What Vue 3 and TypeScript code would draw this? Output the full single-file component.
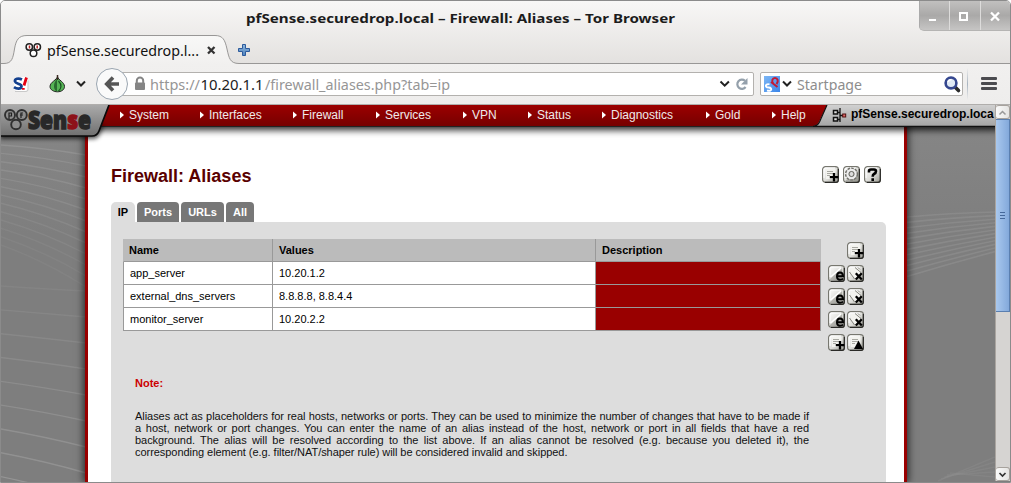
<script setup lang="ts">
interface MenuEntry { label: string }
interface AliasRow { name: string; values: string }

const menu: MenuEntry[] = [
  'System', 'Interfaces', 'Firewall', 'Services', 'VPN', 'Status', 'Diagnostics', 'Gold', 'Help',
].map((label) => ({ label }))

const tabs: string[] = ['IP', 'Ports', 'URLs', 'All']

const aliases: AliasRow[] = [
  { name: 'app_server', values: '10.20.1.2' },
  { name: 'external_dns_servers', values: '8.8.8.8, 8.8.4.4' },
  { name: 'monitor_server', values: '10.20.2.2' },
]

const noteLines: string[] = [
  'Aliases act as placeholders for real hosts, networks or ports. They can be used to minimize the number of changes that have to be made if',
  'a host, network or port changes. You can enter the name of an alias instead of the host, network or port in all fields that have a red',
  'background. The alias will be resolved according to the list above. If an alias cannot be resolved (e.g. because you deleted it), the',
  'corresponding element (e.g. filter/NAT/shaper rule) will be considered invalid and skipped.',
]

const range = (n: number): number[] => Array.from({ length: n }, (_, i) => i)

// Faint curved streaks of the page backdrop, in content coordinates.
const leftUpper = range(13).map((i) => `M0 ${40 + i * 8.3} Q45 ${43 + i * 9.4} 86 ${50 + i * 11}`)
const leftLower = range(9).map((i) => `M0 ${181 + i * 23.8} Q45 ${184 + i * 24.6} 86 ${186 + i * 26}`)
const rightUpper = range(12).map((i) => `M907 ${112 + i * 5.4} Q950 ${108 + i * 4.6} 995 ${107 + i * 3.6}`)
const rightLower = range(5).map((i) => `M${938 + i * 3} ${376 - i * 2} L995 ${352 + i * 5}`)
</script>

<template>
  <div class="window">
    <header class="titlebar">
      <svg class="title" width="434" height="24" viewBox="0 0 434 24">
        <text x="2" y="17" textLength="429" lengthAdjust="spacingAndGlyphs" class="ui bold">pfSense.securedrop.local – Firewall: Aliases – Tor Browser</text>
      </svg>
      <div class="controls">
        <span class="ctl"><svg width="30" height="30"><path d="M10 19h7" stroke="#fff" stroke-width="2" /></svg></span>
        <span class="ctl"><svg width="30" height="30"><rect x="11" y="12" width="7" height="7" fill="none" stroke="#fff" stroke-width="2" /></svg></span>
        <span class="ctl"><svg width="30" height="30"><path d="M11 11.5l8 8M19 11.5l-8 8" stroke="#fff" stroke-width="2.300" /></svg></span>
      </div>
      <svg class="tabstrip" width="1009" height="30" viewBox="1 35 1009 30">
        <defs>
          <linearGradient id="tabFill" x1="0" y1="0" x2="0" y2="1">
            <stop offset="0" stop-color="#f8f8f7" /><stop offset="1" stop-color="#f1f0ef" />
          </linearGradient>
          <linearGradient id="plusFill" x1="0" y1="0" x2="0" y2="1">
            <stop offset="0" stop-color="#8db6dc" /><stop offset="1" stop-color="#4f83be" />
          </linearGradient>
        </defs>
        <path d="M0 65V63.500H4C12 63.500 13 58 14.500 49C16 40 18.500 35.500 27 35.500H215C223 35.500 225 40 227 49C229 58 230 63.500 239 63.500H1010V65Z" fill="url(#tabFill)" />
        <path d="M0 63.500H4C12 63.500 13 58 14.500 49C16 40 18.500 35.500 27 35.500H215C223 35.500 225 40 227 49C229 58 230 63.500 239 63.500H1011" fill="none" stroke="#989796" />
        <g fill="#fff" stroke="#222" stroke-width="1.500">
          <circle cx="33.500" cy="53.300" r="3.300" /><circle cx="29.300" cy="47" r="3.200" /><circle cx="37.300" cy="47" r="3.200" />
        </g>
        <path d="M29.500 45.500v3M37.200 45.500v3" stroke="#b22" stroke-width="1.500" />
        <text x="47" y="56" textLength="152" lengthAdjust="spacingAndGlyphs" class="ui" fill="#111">pfSense.securedrop.l...</text>
        <path d="M208 47l6.500 6.500M214.500 47l-6.500 6.500" stroke="#333" stroke-width="2.300" />
        <path d="M242.500 44.500h3v4h4v3h-4v4h-3v-4h-4v-3h4z" fill="url(#plusFill)" stroke="#2c5a9c" />
      </svg>
    </header>

    <div class="toolbar">
      <svg class="tools" width="125" height="40" viewBox="1 64 125 40">
        <rect x="14" y="77" width="14" height="14" rx="4" fill="#fff" />
        <path d="M15 91.500h11q2 0 2-2v-9" fill="none" stroke="#c9c9c9" />
        <path d="M22 79.500C18 77.500 14.500 79 15 81.500S22 83.500 21.500 86.500S16.500 89 14 87.200" fill="none" stroke="#14408e" stroke-width="2.700" />
        <path d="M26.500 77.500L24 85.500M23.300 88v1.800" fill="none" stroke="#e60012" stroke-width="2.800" />
        <path d="M57.500 76.500C58 80 64.500 82 64.500 86.500C64.500 90 61 91.800 57.500 91.800S50 90 50 86.500C50 82 57 80 57.500 76.500Z" fill="#55b455" stroke="#222" />
        <path d="M57 79V91.500C53 90 53 83 57 79Z" fill="#2a6a30" />
        <path d="M58.500 81C62.500 85 61 89 58.500 91" fill="none" stroke="#194d20" stroke-width="1.200" />
        <path d="M57.500 75v5" stroke="#3a2a20" stroke-width="1.500" />
        <path d="M77 81.500l4 4 4-4" fill="none" stroke="#222" stroke-width="2" />
      </svg>
      <div class="urlbar">
        <svg width="627" height="24" viewBox="126 72 627 24">
          <path d="M136.800 83v-2.200a3.200 3.200 0 0 1 6.400 0V83" fill="none" stroke="#858585" stroke-width="2" />
          <rect x="135" y="82.500" width="10" height="7.500" rx="1" fill="#858585" />
          <text x="150" y="90" textLength="50" lengthAdjust="spacingAndGlyphs" class="url" fill="#969696">https://</text>
          <text x="200.500" y="90" textLength="63" lengthAdjust="spacingAndGlyphs" class="url" fill="#222">10.20.1.1</text>
          <text x="265" y="90" textLength="185" lengthAdjust="spacingAndGlyphs" class="url" fill="#969696">/firewall_aliases.php?tab=ip</text>
          <path d="M720.500 81.500l4.200 4.200 4.200-4.200" fill="none" stroke="#222" stroke-width="2" />
          <path d="M745 80.800A4.600 4.600 0 1 0 745.600 87" fill="none" stroke="#94a0ab" stroke-width="2.200" />
          <path d="M747.500 78v6.500h-6.500z" fill="#94a0ab" />
        </svg>
      </div>
      <svg class="back" width="34" height="34" viewBox="95 67 34 34">
        <circle cx="112" cy="84" r="15.500" fill="#fafafa" stroke="#9aa5b0" />
        <path d="M119 84H108M113 77.500l-6.300 6.500 6.300 6.500" fill="none" stroke="#555" stroke-width="3.600" />
      </svg>
      <div class="search">
        <svg width="202" height="22" viewBox="761 73 202 22">
          <defs>
            <linearGradient id="sp" x1="0" y1="0" x2="1" y2="1"><stop offset="0" stop-color="#7db7f5" /><stop offset="1" stop-color="#3b86ea" /></linearGradient>
          </defs>
          <rect x="764" y="76" width="16" height="16" fill="url(#sp)" />
          <path d="M769.500 84.500c-2-1-4.500 .5-3.300 2.200s3.800 0 4.800 1.800-1.500 3-4 1.800" fill="none" stroke="#fff" stroke-width="1.900" />
          <path d="M771 82l6.500 5M773.500 84c-2.500-3-1-6 1.500-6s4 3 1.500 6" fill="none" stroke="#c21a35" stroke-width="2" />
          <path d="M783 81.500l4 4 4-4" fill="none" stroke="#222" stroke-width="2" />
          <text x="797" y="90" textLength="65" lengthAdjust="spacingAndGlyphs" class="url" fill="#8d8d8d">Startpage</text>
          <path d="M955 87l3.500 3.500" stroke="#2b2b2b" stroke-width="3.600" stroke-linecap="round" />
          <circle cx="951" cy="83" r="5.400" fill="#dfe9f5" stroke="#35478f" stroke-width="2.600" />
          <path d="M948 82q1-2.500 3.500-2.500" fill="none" stroke="#fff" stroke-width="1.500" />
        </svg>
      </div>
      <span class="sep"></span>
      <div class="burger"><i></i><i></i><i></i></div>
    </div>

    <main class="viewport">
      <svg class="backdrop" width="994" height="377" viewBox="1 105 994 377">
        <g transform="translate(0 105)" fill="none">
          <g stroke="#999" stroke-width="1.400">
            <path v-for="(d, i) in leftUpper" :key="'a' + i" :d="d" :opacity="0.6 - i * 0.035" />
            <path v-for="(d, i) in leftLower" :key="'b' + i" :d="d" :opacity="0.25 + i * 0.07" />
          </g>
          <g stroke="#8f8f8f" stroke-width="1.600">
            <path v-for="(d, i) in rightUpper" :key="'c' + i" :d="d" opacity=".65" />
            <path v-for="(d, i) in rightLower" :key="'d' + i" :d="d" opacity=".35" />
          </g>
        </g>
      </svg>

      <svg width="0" height="0" class="defs">
        <defs>
          <linearGradient id="btnFill" x1="0" y1="0" x2="1" y2="1">
            <stop offset="0" stop-color="#fff" /><stop offset=".55" stop-color="#dcdcd8" /><stop offset="1" stop-color="#96968e" />
          </linearGradient>
          <symbol id="btn" viewBox="0 0 17 17">
            <rect x=".6" y=".6" width="15.800" height="15.800" rx="3" fill="url(#btnFill)" stroke="#77776f" stroke-width="1.200" />
            <path d="M2 12V3.500Q2 2 3.500 2H13" fill="none" stroke="#fff" />
            <path d="M3 16.300H14Q16.300 16.300 16.300 14V3" fill="none" stroke="#2a2a27" stroke-width="1.200" />
          </symbol>
          <symbol id="page" viewBox="0 0 17 17">
            <use href="#btn" /><path d="M4 3h9.500v10H4z" fill="#f3f3ef" /><path d="M5 5.500h6M5 7.500h6M5 9.500h3" stroke="#a8a8a2" />
          </symbol>
          <symbol id="add" viewBox="0 0 17 17">
            <use href="#page" /><path d="M12 7v8.500M7.800 11.200h8.500" stroke="#000" stroke-width="2.300" />
          </symbol>
          <symbol id="up" viewBox="0 0 17 17">
            <use href="#page" /><path d="M11.500 6.500L16 15H7z" fill="#000" />
          </symbol>
          <symbol id="edit" viewBox="0 0 17 17">
            <use href="#btn" /><path d="M2 14L14 3v12H2z" fill="#8d8d86" opacity=".55" /><path d="M2.500 12L13 3" stroke="#fff" stroke-width="1.500" />
            <path d="M9 11.200H15Q15 7.500 12 7.500T9 11.200T12 14.800Q14 14.800 15 13.500" fill="none" stroke="#000" stroke-width="2" />
          </symbol>
          <symbol id="del" viewBox="0 0 17 17">
            <use href="#btn" /><path d="M4 3h9v8L9 14 4 9z" fill="#f3f3ef" /><path d="M8 2.500l6 5M2.500 7l5 7M11 2.500l2 2" stroke="#85857e" fill="none" />
            <path d="M8.800 8.200l6 6.300M14.800 8.200l-6 6.300" stroke="#000" stroke-width="2.300" />
          </symbol>
          <symbol id="gear" viewBox="0 0 17 17">
            <use href="#btn" /><path d="M2 15L15 5v10z" fill="#8f8f88" opacity=".6" />
            <circle cx="8.500" cy="8" r="5.400" fill="#ccc" stroke="#70706a" stroke-width="2.400" stroke-dasharray="2.400 1.100" />
            <circle cx="8.500" cy="8" r="4.200" fill="none" stroke="#eee" stroke-width="2" /><circle cx="8.500" cy="8" r="2.500" fill="#ddd" stroke="#66665f" />
          </symbol>
          <symbol id="help" viewBox="0 0 17 17">
            <use href="#btn" /><path d="M5 6.500V5q0-1.500 2-1.500h3q2 0 2 1.800T10 8Q8.700 8.700 8.700 10.800M8.700 12.200V15" fill="none" stroke="#000" stroke-width="2.600" />
          </symbol>
        </defs>
      </svg>

      <section class="page">
        <div class="heading">
          <h1>Firewall: Aliases</h1>
          <div class="actions">
            <svg width="17" height="17"><use href="#add" /></svg>
            <svg width="17" height="17"><use href="#gear" /></svg>
            <svg width="17" height="17"><use href="#help" /></svg>
          </div>
        </div>
        <nav class="tabs">
          <span v-for="(t, i) in tabs" :key="t" :class="['tab', 't' + i, { active: i === 0 }]">{{ t }}</span>
        </nav>
        <div class="panel">
          <div class="list">
            <div class="grid">
              <div class="row head"><span>Name</span><span>Values</span><span>Description</span></div>
              <div v-for="a in aliases" :key="a.name" class="row">
                <span>{{ a.name }}</span><span>{{ a.values }}</span><span class="red"></span>
              </div>
            </div>
            <div class="rowicons">
              <div class="pair"><svg width="17" height="17"><use href="#add" /></svg></div>
              <div v-for="a in aliases" :key="a.name" class="pair">
                <svg width="17" height="17"><use href="#edit" /></svg><svg width="17" height="17"><use href="#del" /></svg>
              </div>
              <div class="pair"><svg width="17" height="17"><use href="#add" /></svg><svg width="17" height="17"><use href="#up" /></svg></div>
            </div>
          </div>
          <div class="note">
            <strong>Note:</strong>
            <p><span v-for="l in noteLines" :key="l">{{ l }}</span></p>
          </div>
        </div>
      </section>

      <div class="menubar">
        <span v-for="m in menu" :key="m.label" class="entry"><svg width="4" height="8" viewBox="0 0 4 8"><path d="M0 0.500L4 4L0 7.500Z" fill="#fff" /></svg>{{ m.label }}</span>
      </div>
      <svg class="host" width="182" height="22" viewBox="813 105 182 22">
        <defs><linearGradient id="hostFill" x1="0" y1="0" x2="0" y2="1"><stop offset="0" stop-color="#d0d0d0" /><stop offset="1" stop-color="#a5a5a5" /></linearGradient></defs>
        <path d="M827 105H995V126H813Q817 126 819 122Z" fill="url(#hostFill)" />
        <path d="M827 105L819.500 122Q817.500 126 813 126.300H995" fill="none" stroke="#111" stroke-width="1.200" />
        <path d="M833.500 110.500h4v3.500h-4zM833.500 117.500h4v3.500h-4z" fill="#ddd" stroke="#111" stroke-width="1.500" />
        <path d="M838 112.500h2.500M838 119.500h2.500M840 108v14M840 115.500h3" stroke="#111" stroke-width="1.300" fill="none" />
        <rect x="842.700" y="114" width="3" height="3" fill="#d66" stroke="#501010" />
      </svg>
      <div class="hostname">pfSense.securedrop.loca</div>
      <svg class="logo" width="112" height="42" viewBox="1 105 112 42">
        <defs>
          <linearGradient id="logoFill" x1="0" y1="0" x2="0" y2="1"><stop offset="0" stop-color="#aaa" /><stop offset="1" stop-color="#707070" /></linearGradient>
          <filter id="soft" x="-10%" y="-30%" width="120%" height="170%"><feGaussianBlur stdDeviation="2" /></filter>
        </defs>
        <path d="M0 125H104L100 134Q98 139 93 139H0Z" fill="#000" opacity=".65" filter="url(#soft)" />
        <path d="M0 105H109L99 131Q97 136 92 136H0Z" fill="url(#logoFill)" />
        <path d="M109 105L99 131Q97 136 92 136H0" fill="none" stroke="#0a0a0a" stroke-width="1.700" />
        <g fill="#8d8d8d" stroke="#303030" stroke-width="1.900">
          <circle cx="16" cy="124.500" r="4.800" /><circle cx="10" cy="115" r="5" /><circle cx="21.800" cy="115" r="5" />
        </g>
        <path d="M9 119v-6h2.500v3H9M21 118v-5h2M20 115h3" fill="none" stroke="#222" stroke-width="1.200" />
        <text x="28" y="129" textLength="63" lengthAdjust="spacingAndGlyphs" class="brand">Sen<tspan fill="#8d1118" stroke="#8d1118">s</tspan>e</text>
      </svg>

      <div class="scroll">
        <div class="sbtn"><svg width="15" height="13"><path d="M4.500 8.500L7.500 5.500L10.500 8.500" fill="none" stroke="#999" stroke-width="1.500" /></svg></div>
        <div class="thumb"><i></i><i></i><i></i></div>
        <div class="track"></div>
        <div class="sbtn"><svg width="15" height="13"><path d="M4.500 5L7.500 8L10.500 5" fill="none" stroke="#333" stroke-width="1.700" /></svg></div>
      </div>
    </main>
  </div>
</template>

<style>
body { margin: 0; background: #fff; overflow: hidden; }
</style>

<style scoped>
* { box-sizing: border-box; }
svg { display: block; }
.window { width: 1011px; height: 483px; border: 1px solid #8b8b8b; border-radius: 5px 5px 0 0; overflow: hidden; background: #efeeed; font-family: "Liberation Sans", Arial, sans-serif; }
.ui { font: 13.5px "Noto Sans", sans-serif; }
.ui.bold { font-weight: 700; font-size: 12.8px; fill: #1c1c1c; }
.url { font: 14px "Noto Sans", sans-serif; }
.titlebar { position: relative; height: 63px; background: linear-gradient(#f8f7f6, #e3e1df); }
.title { position: absolute; left: 243px; top: 5px; }
.controls { position: absolute; right: 0; top: 0; display: flex; width: 91px; height: 30px; border-radius: 0 0 0 5px; overflow: hidden; background: linear-gradient(#c1c0bf, #aaa9a8 50%, #c6c5c4); border-bottom: 1px solid #b5b4b3; }
.ctl { flex: 1; border-left: 1px solid #dddcdb; }
.ctl:first-child { border-left-color: #aaa; }
.ctl svg { margin-left: -1px; }
.tabstrip { position: absolute; left: 0; top: 34px; }
.toolbar { position: relative; height: 41px; display: flex; align-items: center; background: linear-gradient(#f1f0ef, #eeedec); border-bottom: 1px solid #b0aeac; }
.tools { flex: none; margin-right: -14px; }
.urlbar { width: 642px; height: 24px; display: flex; justify-content: flex-end; border: 1px solid #b3b1ae; border-radius: 2px; background: #fff; align-items: center; }
.back { position: absolute; left: 94px; top: 3px; }
.search { margin-left: 6px; width: 203px; height: 24px; border: 1px solid #b3b1ae; border-radius: 2px; background: #fff; }
.sep { width: 1px; height: 32px; margin-left: 4px; background: linear-gradient(transparent, #a8b4c0, transparent); }
.burger { margin-left: 13px; display: flex; flex-direction: column; gap: 2px; margin-top: -2px; }
.burger i { width: 16px; height: 3px; border-radius: 1px; background: #4b4b4f; }
.viewport { position: relative; height: 377px; overflow: hidden; background: linear-gradient(#878787, #7e7e7e 130px, #7e7e7e); }
.backdrop { position: absolute; inset: 0 auto auto 0; }
.defs { position: absolute; }
.page { position: relative; width: 822px; height: 377px; margin-left: 84px; border: solid #900; border-width: 0 3px; background: #fff; padding: 60px 18px 0 23px; box-shadow: 0 0 8px 1px rgba(0, 0, 0, .75); }
.heading { display: flex; justify-content: space-between; height: 37px; padding-right: 5px; }
h1 { margin: 0; font-size: 18px; line-height: 22px; color: #590000; }
.actions { display: flex; gap: 4px; padding-top: 1px; }
.tabs { display: flex; gap: 2px; height: 20px; }
.tab { height: 20px; background: #777; color: #fff; font: bold 11px/20px "Liberation Sans", Arial, sans-serif; text-align: center; border-radius: 4px 4px 0 0; }
.tab.active { background: #ddd; color: #000; border-radius: 5px 5px 0 0; }
.t0 { width: 24px; }
.t1 { width: 42px; }
.t2 { width: 43px; }
.t3 { width: 28px; }
.panel { width: 775px; height: 260px; padding: 17px 12px 0; background: #ddd; border-radius: 0 5px 0 0; font-size: 11px; }
.list { display: flex; gap: 7px; height: 115px; }
.grid { width: 698px; }
.row { display: grid; grid-template-columns: 150px 323px 225px; height: 23px; line-height: 22px; background: #fff; }
.row span { border-right: 1px solid #999; border-bottom: 1px solid #999; padding-left: 6px; }
.row span:first-child { border-left: 1px solid #999; }
.head { background: #bbb; font-weight: bold; }
.head span:first-child { border-left-color: #bbb; padding-left: 5px; }
.head span:last-child { border-right-color: #bbb; }
.row .red { background: #900; }
.rowicons { width: 36px; padding-top: 3px; }
.pair { display: flex; justify-content: flex-end; gap: 2px; height: 23px; }
.note { padding: 23px 12px 0; line-height: 12px; }
.note strong { color: #c00; display: block; }
p { margin: 21px 0 0; width: 674px; color: #111; letter-spacing: -.05px; }
p span { display: block; white-space: nowrap; text-align: justify; text-align-last: justify; }
p span:last-child { text-align-last: left; }
.menubar { position: absolute; inset: 0 0 auto 0; height: 22px; padding-left: 119px; display: grid; grid-template-columns: 80px 93px 83px 87px 65px 74px 104px 66px 60px; background: linear-gradient(#9c0000, #760000); border-bottom: 1px solid #222; box-shadow: 0 2px 7px 1px rgba(0, 0, 0, .85); font-size: 12px; line-height: 20px; color: #f0eaea; }
.entry { display: flex; align-items: center; gap: 5px; height: 20px; }
.host { position: absolute; left: 812px; top: 0; }
.hostname { position: absolute; left: 850px; top: 0; width: 144px; height: 20px; white-space: nowrap; font-weight: bold; font-size: 12px; line-height: 18px; color: #000; }
.logo { position: absolute; left: 0; top: 0; }
.brand { font: 800 24.5px "Open Sans", sans-serif; fill: #282828; stroke: #282828; stroke-width: 1.4px; }
.scroll { position: absolute; right: 0; top: 0; width: 15px; height: 376px; display: flex; flex-direction: column; background: #d6d4d2; border-left: 1px solid #aaa5a0; }
.sbtn { height: 14px; flex: none; border: 1px solid #a7a29d; border-left: 0; background: linear-gradient(90deg, #fafafa, #e5e4e2); border-radius: 3px; }
.sbtn svg { margin-left: -1px; }
.thumb { flex: none; height: 193px; border: 1px solid #5a7fb0; border-left: 0; background: linear-gradient(90deg, #a9c8ee, #83a9db); display: flex; flex-direction: column; align-items: center; justify-content: center; gap: 2px; }
.thumb i { width: 5px; height: 1px; background: #45689a; }
.track { flex: 1; }
</style>
